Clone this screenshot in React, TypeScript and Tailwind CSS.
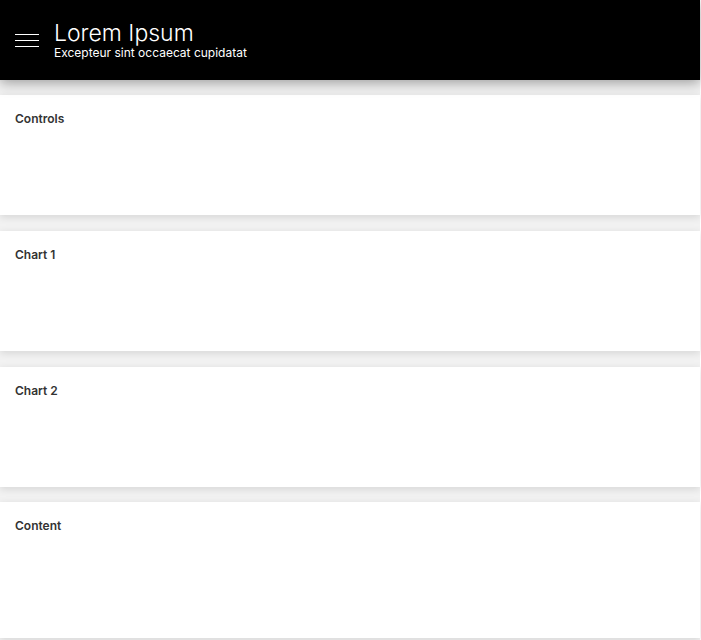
import React from 'react'

const sections = [
  { title: 'Controls', cls: 'h-[120px]' },
  { title: 'Chart 1', cls: 'h-[120px]' },
  { title: 'Chart 2', cls: 'h-[120px]' },
  { title: 'Content', cls: 'h-[136px] -mt-px' },
]

export default function App() {
  return (
    <div className="w-[700px] min-h-[640px] bg-[#f2f2f2] font-['Inter',sans-serif]">
      <header className="relative z-10 flex items-center h-20 bg-black text-white shadow-[0_3px_12px_rgba(0,0,0,0.35)]">
        <button className="flex flex-col gap-[4.5px] ml-[15px] mr-[15px] mt-[1px] w-6">
          <span className="block h-[1.5px] w-6 bg-white" />
          <span className="block h-[1.5px] w-6 bg-white" />
          <span className="block h-[1.5px] w-6 bg-white" />
        </button>
        <div className="flex flex-col">
          <h1 className="text-[23px] leading-[25px] font-light">Lorem Ipsum</h1>
          <p className="text-[12px] leading-[14px]">Excepteur sint occaecat cupidatat</p>
        </div>
      </header>

      <main className="flex flex-col gap-4 pt-[15px]">
        { sections.map(s => (
          <section key={ s.title } className={ `bg-white px-[15px] pt-4 shadow-[0_2px_8px_rgba(0,0,0,0.12)] ${ s.cls }` }>
            <h2 className="text-[12px] leading-4 font-semibold text-[#333]">{ s.title }</h2>
          </section>
        )) }
      </main>
    </div>
  )
}
